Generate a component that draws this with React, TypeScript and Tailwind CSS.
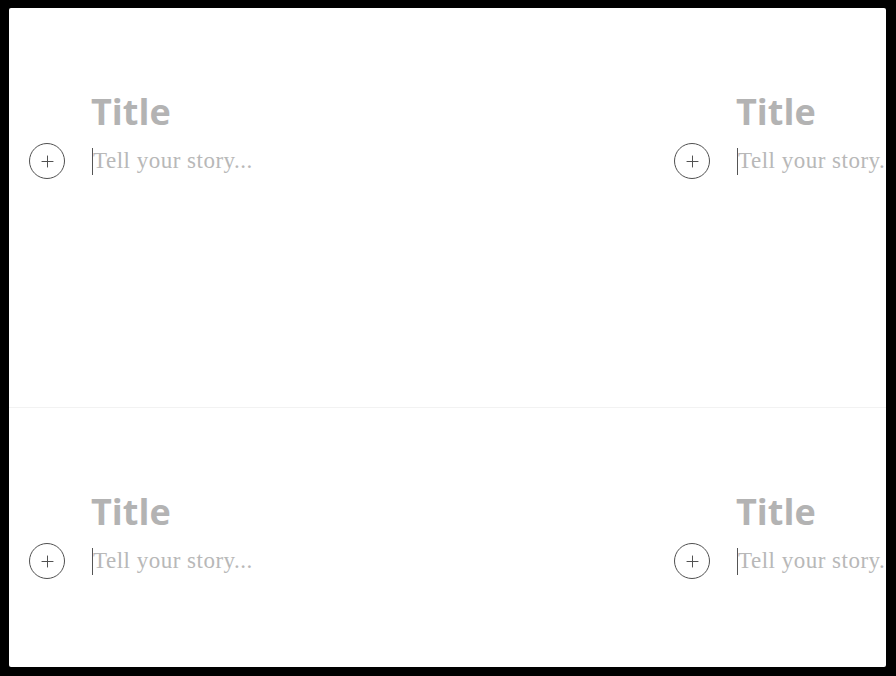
import { Plus } from "lucide-react";

function Editor() {
  return (
    <div className="flex h-[400px] flex-col pt-[83px]">
      <h1 className="pl-[82px] font-['Open_Sans',sans-serif] text-[36px] font-bold leading-[42px] text-[#b3b3b3]">
        Title
      </h1>
      <div className="mt-[10px] flex items-center">
        <button
          type="button"
          className="ml-[20px] flex h-9 w-9 shrink-0 items-center justify-center rounded-full border-[1.5px] border-[#505050] text-[#505050]"
        >
          <Plus size={19} strokeWidth={1.25} />
        </button>
        <div className="ml-[27px] flex items-center">
          <span className="h-[27px] w-px bg-[#555]" />
          <span className="whitespace-nowrap font-['Liberation_Serif',serif] text-[23px] leading-[30px] tracking-[0.5px] text-[#b8b8b8]">
            Tell your story...
          </span>
        </div>
      </div>
    </div>
  );
}

export default function App() {
  return (
    <div className="h-screen bg-black pb-[9px] pl-[9px] pr-[10px] pt-[8px]">
      <div className="h-full overflow-hidden rounded-[2px] bg-white">
        <div className="grid w-max grid-cols-[645px_645px] grid-rows-[400px_400px]">
          <div className="border-b border-[#f2f2f2]">
            <Editor />
          </div>
          <div className="border-b border-[#f2f2f2]">
            <Editor />
          </div>
          <div>
            <Editor />
          </div>
          <div>
            <Editor />
          </div>
        </div>
      </div>
    </div>
  );
}
